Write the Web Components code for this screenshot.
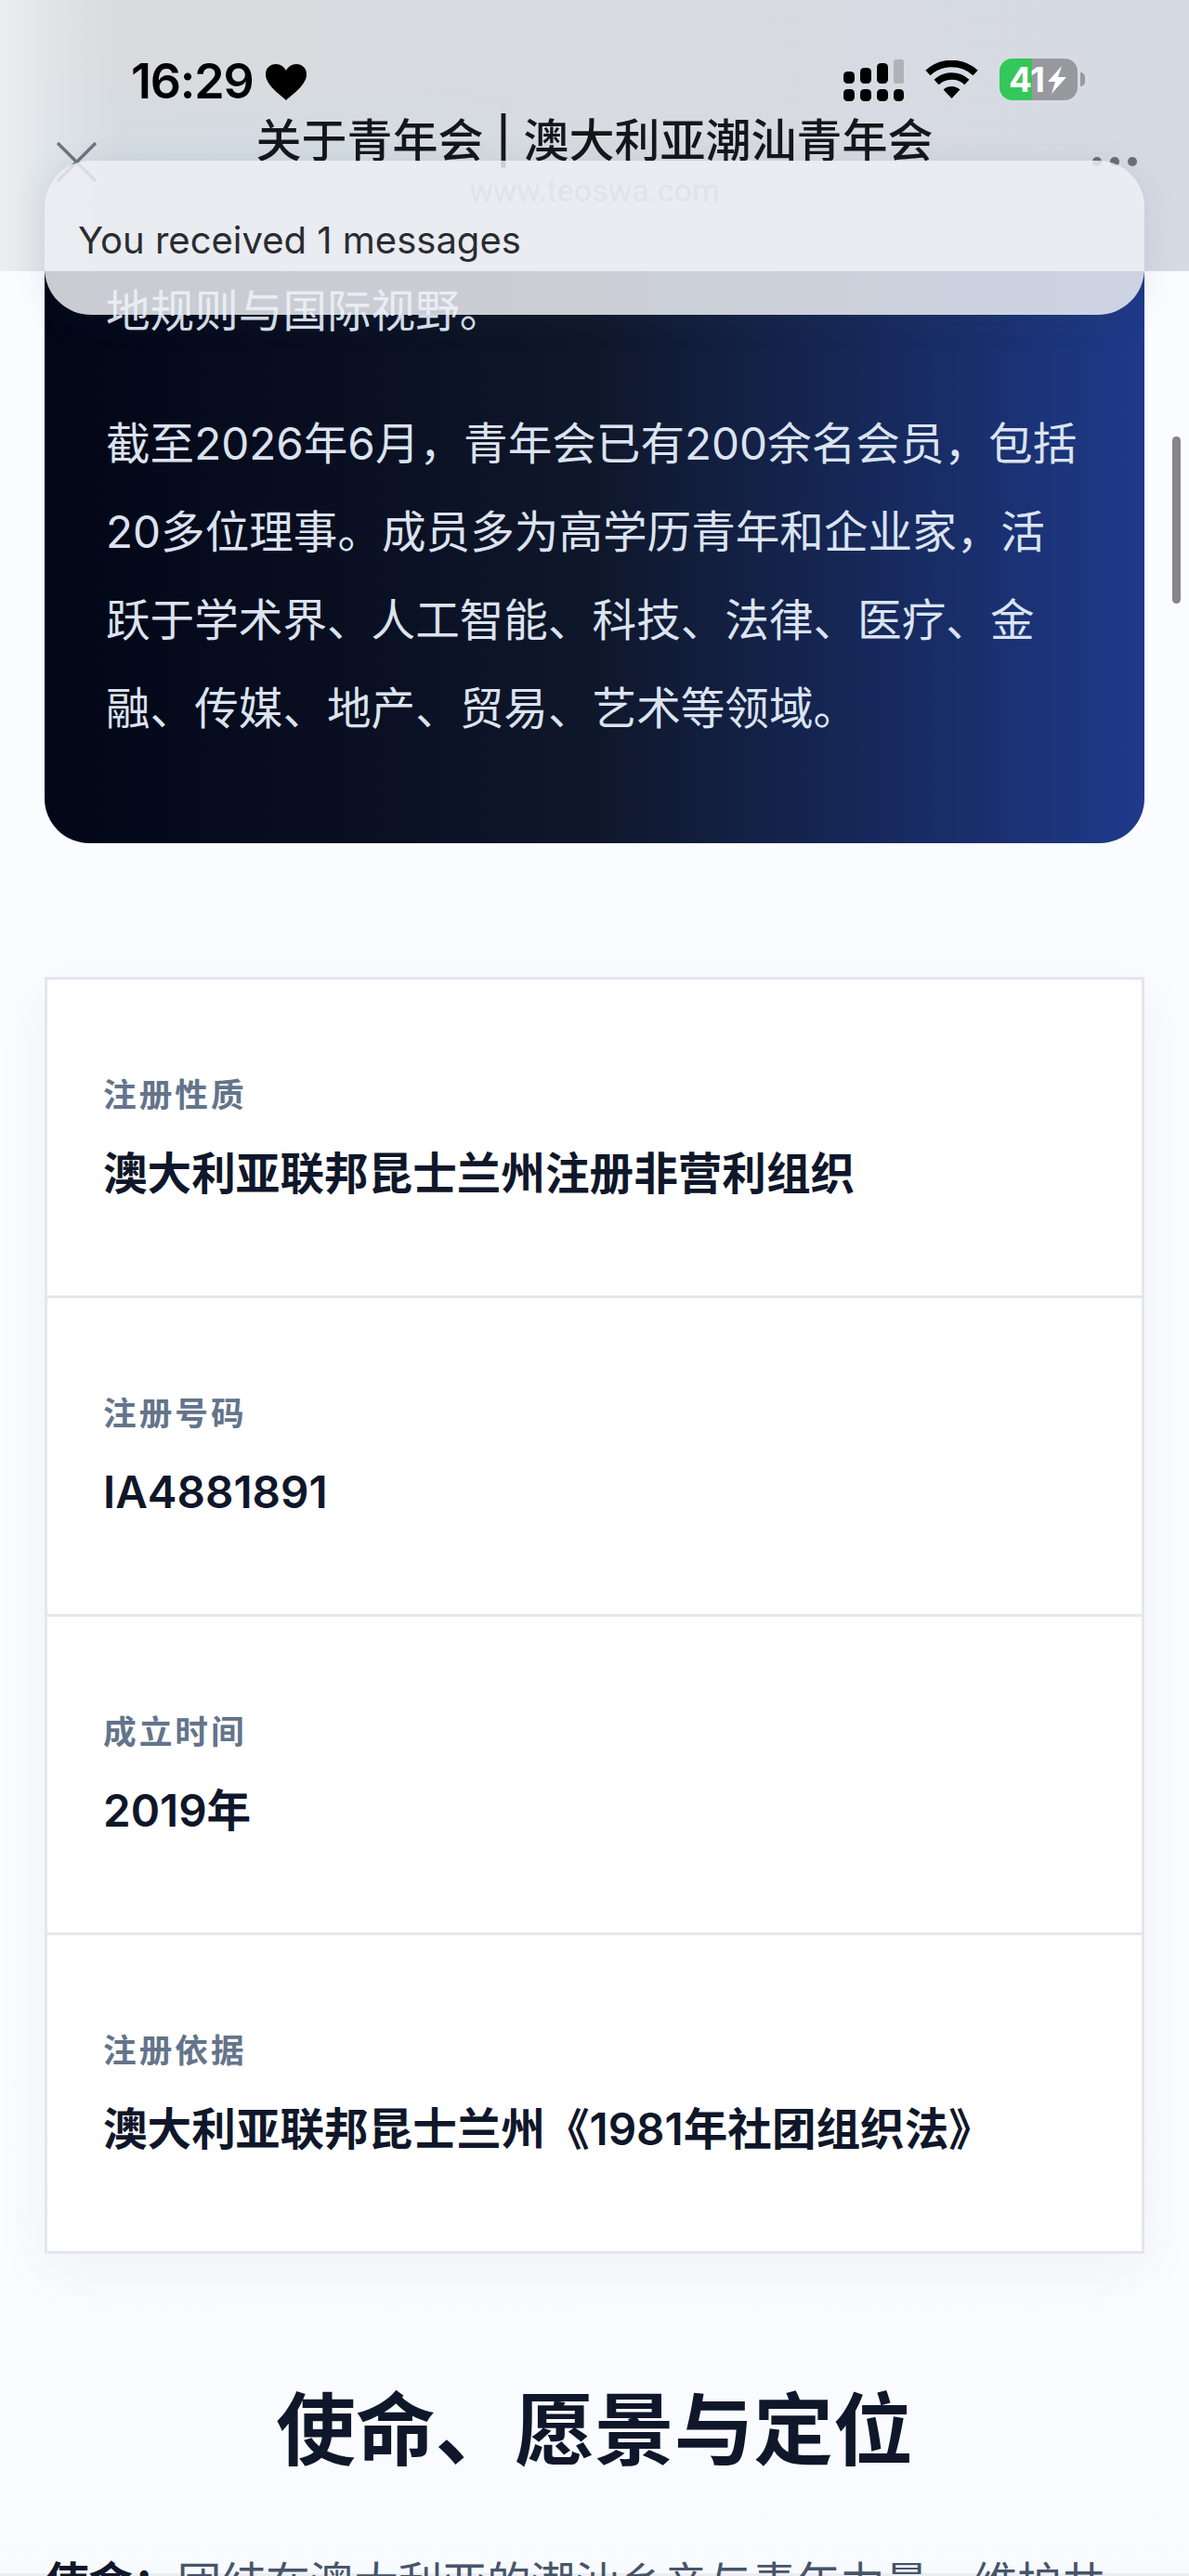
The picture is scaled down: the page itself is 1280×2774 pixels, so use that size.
<!DOCTYPE html>
<html lang="zh-CN">
<head>
<meta charset="utf-8">
<title>关于青年会</title>
<style>
  html, body { margin: 0; padding: 0; background: #fbfcff; }
  body { font-family: Inter, "Noto Sans CJK SC", sans-serif; }
</style>
</head>
<body>
<app-page>
  <nav-header slot="overlay">
    <span slot="title">关于青年会 | 澳大利亚潮汕青年会</span>
    <span slot="url">www.teoswa.com</span>
  </nav-header>
  <toast-note slot="overlay">You received 1 messages</toast-note>
  <page-scrollbar slot="overlay"></page-scrollbar>

  <dark-card>
    <p>地规则与国际视野。</p>
    <p>截至2026年6月，青年会已有200余名会员，包括<br>20多位理事。成员多为高学历青年和企业家，活<br>跃于学术界、人工智能、科技、法律、医疗、金<br>融、传媒、地产、贸易、艺术等领域。</p>
  </dark-card>

  <info-table>
    <info-row><span slot="label">注册性质</span>澳大利亚联邦昆士兰州注册非营利组织</info-row>
    <info-row><span slot="label">注册号码</span>IA4881891</info-row>
    <info-row><span slot="label">成立时间</span>2019年</info-row>
    <info-row><span slot="label">注册依据</span>澳大利亚联邦昆士兰州《1981年社团组织法》</info-row>
  </info-table>

  <section-block>
    <span slot="title">使命、愿景与定位</span>
    <b>使命：</b>团结在澳大利亚的潮汕乡亲与青年力量，维护共
  </section-block>
</app-page>

<script>
const CJK = 'Inter, "Noto Sans CJK SC", sans-serif';

// page frame, overlays sit on top of the scrolled content
class AppPage extends HTMLElement {
  constructor() {
    super();
    this.attachShadow({ mode: 'open' });
    this.shadowRoot.innerHTML = `
      <style>
        :host { display: block; position: relative; width: 1280px; height: 2774px; overflow: hidden;
                background: linear-gradient(180deg, #fbfcff 0%, #fbfcff 80%, #f8fbfe 100%);
                font-family: ${CJK}; }
        .edge { position: absolute; left: 0; right: 0; bottom: 0; height: 3px; background: rgba(60,70,90,.07); }
      </style>
      <slot></slot>
      <slot name="overlay"></slot>
      <div class="edge"></div>
    `;
  }
}
customElements.define('app-page', AppPage);

class StatusBar extends HTMLElement {
  constructor() {
    super();
    this.attachShadow({ mode: 'open' });
    this.shadowRoot.innerHTML = `
      <style>
        :host { display: flex; align-items: flex-start; justify-content: space-between;
                padding: 62px 112px 0 141px; color: #000; }
        .left { display: flex; align-items: center; gap: 13px; font-size: 52px; font-weight: 600;
                line-height: 48px; letter-spacing: -1.2px; margin-top: 2px; }
        .right { display: flex; align-items: flex-start; }
        svg { display: block; }
        .signal { margin-top: 2px; }
        .wifi { margin: 3px 0 0 22px; }
        .battery { position: relative; display: flex; align-items: center; box-sizing: border-box;
                   width: 84px; height: 45px; margin: 1px 0 0 23px; padding-left: 10px; border-radius: 14px;
                   background: linear-gradient(90deg, #34c759 0 35px, #97999f 35px); color: #fff;
                   font-size: 37px; font-weight: 700; letter-spacing: -.5px; line-height: 45px; }
        .battery svg { margin-left: 3px; }
        .nub { width: 5px; height: 15px; margin: 16px 0 0 3px; background: #97999f; border-radius: 0 5px 5px 0; }
      </style>
      <div class="left">16:29
        <svg width="44" height="39" viewBox="0 0 44 39"><path d="M22 39C16 33 0 23 0 11 0 4 5 0 11 0c5 0 9 3 11 7 2-4 6-7 11-7 6 0 11 4 11 11 0 12-16 22-22 28z"/></svg>
      </div>
      <div class="right">
        <svg class="signal" width="66" height="45" viewBox="0 0 66 45">
          <rect x="0" y="13" width="12" height="13" rx="4.5"/>
          <rect x="18" y="9" width="12" height="17" rx="4.5"/>
          <rect x="36" y="4" width="12" height="22" rx="4.5"/>
          <rect x="54" y="0" width="11" height="26" rx="2.5" fill="#b0b2b8"/>
          <rect x="0" y="32" width="12" height="13" rx="4.5"/>
          <rect x="18" y="32" width="12" height="13" rx="4.5"/>
          <rect x="36" y="32" width="12" height="13" rx="4.5"/>
          <rect x="54" y="32" width="11" height="13" rx="4.5"/>
        </svg>
        <svg class="wifi" width="57" height="41" viewBox="0 0 57 41" fill="none" stroke="#000" stroke-width="7.5">
          <path d="M2.9 13.6A37.5 37.5 0 0 1 54.1 13.6"/>
          <path d="M12.1 23.4A24 24 0 0 1 44.9 23.4"/>
          <path d="M28.5 41 19.6 31.5A13 13 0 0 1 37.4 31.5Z" fill="#000" stroke="none"/>
        </svg>
        <div class="battery">41
          <svg width="20" height="30" viewBox="0 0 20 30"><path d="M15 0 0 17h8L4 30 20 12h-9z" fill="#fff"/></svg>
        </div>
        <div class="nub"></div>
      </div>
    `;
  }
}
customElements.define('status-bar', StatusBar);

// browser header, mostly hidden behind the toast
class NavHeader extends HTMLElement {
  constructor() {
    super();
    this.attachShadow({ mode: 'open' });
    this.shadowRoot.innerHTML = `
      <style>
        :host { display: block; position: absolute; left: 0; top: 0; width: 1280px; height: 292px;
                background:
                  linear-gradient(90deg, rgba(240,240,241,.9) 0, rgba(232,236,240,.55) 50px, rgba(220,228,234,0) 130px),
                  radial-gradient(ellipse 520px 130px at 240px 190px, rgba(205,222,230,.6), rgba(205,222,230,0)),
                  linear-gradient(90deg, #d9dbde 0%, #d8dbe0 50%, #d6dae4 100%); }
        .bar { display: flex; align-items: center; justify-content: space-between; height: 100px;
               padding: 0 56px 0 61px; margin-top: 12px; color: #14161a; }
        .mid { display: flex; flex-direction: column; align-items: center; }
        .title { font-size: 49px; line-height: 62px; font-weight: 500; }
        .url { font-family: Roboto, sans-serif; font-size: 34px; line-height: 44px; color: #9aa0a8; }
        .dots { display: flex; gap: 9px; }
        .dots i { width: 10px; height: 10px; border-radius: 50%; background: #6b6e76; }
      </style>
      <status-bar></status-bar>
      <div class="bar">
        <svg width="43" height="43" viewBox="0 0 43 43" stroke="#70747c" stroke-width="3.5"><path d="M1 1 42 42M42 1 1 42"/></svg>
        <div class="mid">
          <div class="title"><slot name="title"></slot></div>
          <div class="url"><slot name="url"></slot></div>
        </div>
        <div class="dots"><i></i><i></i><i></i></div>
      </div>
    `;
  }
}
customElements.define('nav-header', NavHeader);

class ToastNote extends HTMLElement {
  constructor() {
    super();
    this.attachShadow({ mode: 'open' });
    this.shadowRoot.innerHTML = `
      <style>
        :host { display: block; position: absolute; left: 48px; top: 173px; width: 1184px; height: 166px;
                box-sizing: border-box; padding: 60px 0 0 36px; border-radius: 50px;
                background: rgba(236,238,243,.85); box-shadow: 0 6px 36px rgba(60,70,90,.12);
                font-family: Inter, sans-serif; font-size: 40px; line-height: 52px; color: #2a2c30; }
      </style>
      <slot></slot>
    `;
  }
}
customElements.define('toast-note', ToastNote);

class PageScrollbar extends HTMLElement {
  constructor() {
    super();
    this.attachShadow({ mode: 'open' });
    this.shadowRoot.innerHTML = `
      <style>
        :host { display: block; position: absolute; left: 1262px; top: 470px; width: 9px; height: 180px;
                border-radius: 5px; background: #86868a; box-shadow: 0 0 0 3px rgba(255,255,255,.7); }
      </style>
    `;
  }
}
customElements.define('page-scrollbar', PageScrollbar);

class DarkCard extends HTMLElement {
  constructor() {
    super();
    this.attachShadow({ mode: 'open' });
    this.shadowRoot.innerHTML = `
      <style>
        :host { display: block; box-sizing: border-box; width: 1184px; height: 908px; margin: 0 48px;
                padding: 287px 66px 0; border-radius: 0 0 48px 48px;
                background: linear-gradient(90deg, #020617 0%, #0f172a 50%, #1e3a8a 100%);
                color: #dbe3f0; font-size: 47.6px; line-height: 95.2px; white-space: nowrap; }
        ::slotted(p) { margin: 0 0 47.6px; }
      </style>
      <slot></slot>
    `;
  }
}
customElements.define('dark-card', DarkCard);

class InfoTable extends HTMLElement {
  constructor() {
    super();
    this.attachShadow({ mode: 'open' });
    this.shadowRoot.innerHTML = `
      <style>
        :host { display: block; box-sizing: border-box; width: 1184px; margin: 144px 48px 0;
                background: #fff; border: 3px solid #e2e6ef;
                box-shadow: 0 16px 60px rgba(30,41,59,.05); }
      </style>
      <slot></slot>
    `;
  }
}
customElements.define('info-table', InfoTable);

class InfoRow extends HTMLElement {
  constructor() {
    super();
    this.attachShadow({ mode: 'open' });
    this.shadowRoot.innerHTML = `
      <style>
        :host { display: block; box-sizing: border-box; padding: 95px 60px 95px; height: 343px;
                border-bottom: 3px solid #e5e7eb; }
        :host(:last-child) { border-bottom: 0; height: 340px; }
        .label { height: 59px; line-height: 59px; margin-bottom: 19px; font-size: 35.7px; font-weight: 600;
                 letter-spacing: 3px; color: #64748b; }
        .value { font-size: 47.6px; line-height: 72px; font-weight: 600; color: #0f172a; white-space: nowrap; }
      </style>
      <div class="label"><slot name="label"></slot></div>
      <div class="value"><slot></slot></div>
    `;
  }
}
customElements.define('info-row', InfoRow);

class SectionBlock extends HTMLElement {
  constructor() {
    super();
    this.attachShadow({ mode: 'open' });
    this.shadowRoot.innerHTML = `
      <style>
        :host { display: block; margin: 135px 48px 0; }
        h2 { margin: 0 0 61px; font-size: 85.7px; line-height: 111px; font-weight: 700;
             color: #0f172a; text-align: center; }
        p { margin: 0; font-size: 47.6px; line-height: 95.2px; color: #475569; white-space: nowrap; }
        ::slotted(b) { font-weight: 700; color: #0f172a; }
      </style>
      <h2><slot name="title"></slot></h2>
      <p><slot></slot></p>
    `;
  }
}
customElements.define('section-block', SectionBlock);
</script>
</body>
</html>
